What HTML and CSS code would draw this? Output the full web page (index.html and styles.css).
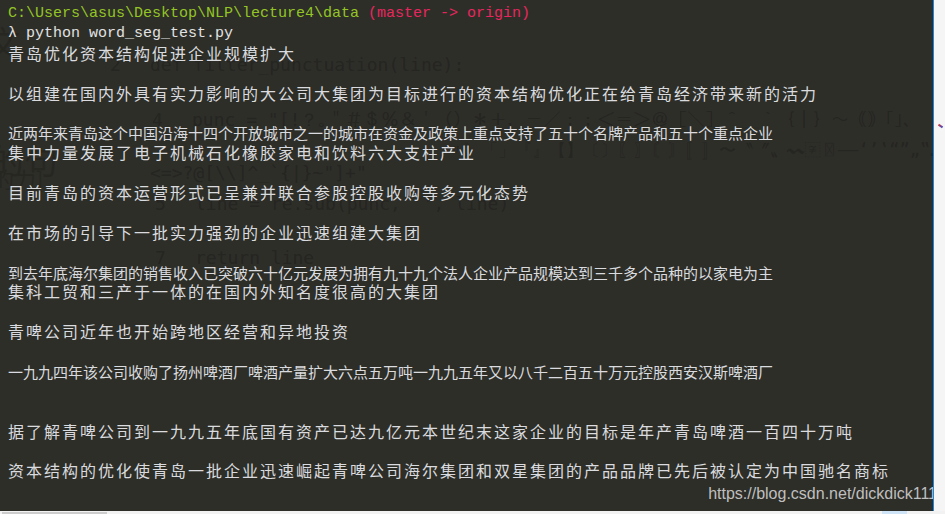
FILE: index.html
```html
<!DOCTYPE html>
<html lang="zh">
<head>
<meta charset="utf-8">
<title>cmder</title>
<link rel="stylesheet" href="styles.css">
</head>
<body>
<div class="screen">
  <div class="window">
    <div class="term">
      <div class="ghost" aria-hidden="true">
        <div class="g g1"><span class="gn">2</span>def filter_punctuation(line):</div>
        <div class="g g2"><span class="gn">4</span>punc = "[!？｡＂＃＄％＆＇（）＊＋，－／：；＜＝＞＠［＼］＾＿｀｛｜｝～｟｠｢｣､</div>
        <div class="g g3">、〃》「」『』【】〔〕〖〗〘〙〚〛〜〝〞〟〰〾〿–—‘’‛“”„‟…‧﹏.!\"#$%&amp;\'()*+,-./:;</div>
        <div class="g g4">&lt;=&gt;?@[\\]^_`{|}~"]+"</div>
        <div class="g g5"><span class="gn">5</span>line = re.sub(punc, '', line)</div>
        <div class="g g6"><span class="gn">7</span>return line</div>
        <div class="gbig gb1">文</div>
        <div class="gbig gb2">的句</div>
        <div class="gbig gb3">的力]</div>
      </div>
      <div class="line mono"><span class="path">C:\Users\asus\Desktop\NLP\lecture4\data</span> <span class="branch">(master -&gt; origin)</span></div>
      <div class="line mono cmd">λ python word_seg_test.py</div>
      <div class="line cjk">青岛优化资本结构促进企业规模扩大</div>
      <div class="line blank"></div>
      <div class="line cjk">以组建在国内外具有实力影响的大公司大集团为目标进行的资本结构优化正在给青岛经济带来新的活力</div>
      <div class="line blank"></div>
      <div class="line cjk narrow">近两年来青岛这个中国沿海十四个开放城市之一的城市在资金及政策上重点支持了五十个名牌产品和五十个重点企业</div>
      <div class="line cjk">集中力量发展了电子机械石化橡胶家电和饮料六大支柱产业</div>
      <div class="line blank"></div>
      <div class="line cjk">目前青岛的资本运营形式已呈兼并联合参股控股收购等多元化态势</div>
      <div class="line blank"></div>
      <div class="line cjk">在市场的引导下一批实力强劲的企业迅速组建大集团</div>
      <div class="line blank"></div>
      <div class="line cjk narrow">到去年底海尔集团的销售收入已突破六十亿元发展为拥有九十九个法人企业产品规模达到三千多个品种的以家电为主</div>
      <div class="line cjk">集科工贸和三产于一体的在国内外知名度很高的大集团</div>
      <div class="line blank"></div>
      <div class="line cjk">青啤公司近年也开始跨地区经营和异地投资</div>
      <div class="line blank"></div>
      <div class="line cjk narrow">一九九四年该公司收购了扬州啤酒厂啤酒产量扩大六点五万吨一九九五年又以八千二百五十万元控股西安汉斯啤酒厂</div>
      <div class="line blank"></div>
      <div class="line blank"></div>
      <div class="line cjk">据了解青啤公司到一九九五年底国有资产已达九亿元本世纪末这家企业的目标是年产青岛啤酒一百四十万吨</div>
      <div class="line blank"></div>
      <div class="line cjk">资本结构的优化使青岛一批企业迅速崛起青啤公司海尔集团和双星集团的产品品牌已先后被认定为中国驰名商标</div>
      <div class="watermark">https://blog.csdn.net/dickdick111</div>
    </div>
    <div class="side"><span class="mark"></span></div>
  </div>
  <div class="bottom">
    <span class="hbar"></span>
    <span class="spacer"></span>
    <span class="blue"></span>
  </div>
</div>
</body>
</html>
```

FILE: styles.css
```css
html, body {
  margin: 0;
  padding: 0;
  background: #f3f3f3;
}

.screen {
  width: 945px;
  height: 514px;
  display: flex;
  flex-direction: column;
  overflow: hidden;
}

.window {
  display: flex;
  height: 511px;
}

.term {
  position: relative;
  width: 934px;
  height: 511px;
  background: #2e2e29;
  border-right: 1px solid #1a86e6;
  padding: 4px 0 0 8px;
  box-sizing: border-box;
  overflow: hidden;
}

.side {
  flex: 1;
  position: relative;
  background: #f5f5f5;
}

.mark {
  position: absolute;
  left: 4px;
  top: 125px;
  width: 5px;
  height: 2px;
  background: linear-gradient(90deg, #d23a3a, #3a4cd2);
  transform: rotate(35deg);
}

.bottom {
  flex: 1;
  display: flex;
  align-items: flex-end;
  background: #f2f2f2;
}

.hbar {
  width: 105px;
  height: 2px;
  margin-left: 2px;
  background: #cdcdcd;
}

.spacer {
  flex: 1;
}

.blue {
  width: 25px;
  height: 3px;
  margin-right: 38px;
  background: #cfe5f7;
}

.line {
  position: relative;
  z-index: 1;
  height: 19.9px;
  line-height: 19.9px;
  white-space: nowrap;
}

.mono {
  font-family: "Liberation Mono", "DejaVu Sans Mono", monospace;
  font-size: 15px;
}

.path {
  color: #93c524;
}

.branch {
  color: #e8265e;
}

.cmd {
  color: #e2e2e2;
}

.cjk {
  font-family: "Noto Sans CJK SC", "Noto Sans", sans-serif;
  font-size: 16px;
  letter-spacing: 2px;
  color: #d9dbde;
}

.cjk.narrow {
  font-size: 15px;
  letter-spacing: 0;
}

.ghost {
  position: absolute;
  inset: 0;
  z-index: 0;
  color: #252521;
  font-family: "DejaVu Sans Mono", monospace;
  font-size: 18px;
  white-space: nowrap;
}

.g {
  position: absolute;
  line-height: 22px;
}

.gn {
  display: inline-block;
  width: 40px;
  margin-left: -40px;
}

.g1 { left: 150px; top: 54px; }
.g2 { left: 192px; top: 109px; }
.g3 { left: 430px; top: 139px; font-size: 17px; }
.g4 { left: 150px; top: 162px; }
.g5 { left: 195px; top: 193px; }
.g6 { left: 195px; top: 247px; }

.gbig {
  position: absolute;
  font-family: "Noto Sans CJK SC", sans-serif;
  font-size: 34px;
  line-height: 40px;
  color: #272722;
}

.gb1 { left: -14px; top: 22px; }
.gb2 { left: -10px; top: 140px; }
.gb3 { left: -8px; top: 158px; font-size: 22px; }

.watermark {
  position: absolute;
  z-index: 2;
  right: -4px;
  top: 485px;
  font-family: "Liberation Sans", Arial, sans-serif;
  font-size: 16px;
  color: #bfbfbf;
  white-space: nowrap;
}
```
